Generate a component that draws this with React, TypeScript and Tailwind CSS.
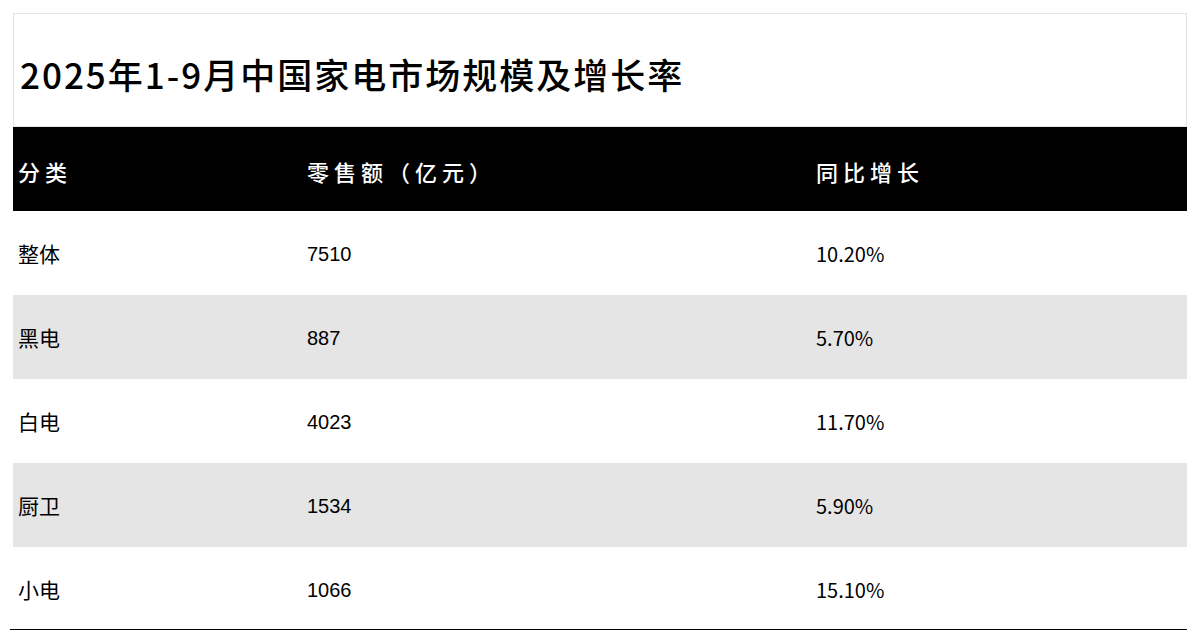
const rows = [
  { name: "整体", amount: "7510", growth: "10.20%" },
  { name: "黑电", amount: "887", growth: "5.70%" },
  { name: "白电", amount: "4023", growth: "11.70%" },
  { name: "厨卫", amount: "1534", growth: "5.90%" },
  { name: "小电", amount: "1066", growth: "15.10%" },
];

const cjk = "font-['Noto_Sans_CJK_SC',sans-serif]";

export default function App() {
  return (
    <main className={`min-h-screen bg-white pt-[13px] pl-[13px] ${cjk}`}>
      <div className="w-[1174px]">
        <div className="h-[114px] border border-[#e4e4e4] flex items-center pl-[6px] pt-[6px]">
          <h1 className="text-[35px] font-medium text-black tracking-[2px] leading-none">
            2025年1-9月中国家电市场规模及增长率
          </h1>
        </div>

        <div className="grid grid-cols-[289px_509px_376px] h-[84px] bg-black text-white items-center text-[22px] font-medium tracking-[5px] pt-[4px]">
          <div className="pl-[5px]">分类</div>
          <div className="pl-[5px]">零售额（亿元）</div>
          <div className="pl-[5px]">同比增长</div>
        </div>

        {rows.map((r, i) => (
          <div
            key={r.name}
            className={`grid grid-cols-[289px_509px_376px] h-[84px] items-center text-[21px] text-black pt-[2px] ${
              i % 2 === 1 ? "bg-[#e5e5e5]" : "bg-white"
            }`}
          >
            <div className="pl-[5px]">{r.name}</div>
            <div className="pl-[5px] font-['Liberation_Sans',sans-serif] text-[20px]">{r.amount}</div>
            <div className="pl-[5px] text-[20px]">{r.growth}</div>
          </div>
        ))}
      </div>
      <div className="w-[1177px] -ml-[3px] -mt-[2px] h-px bg-black" />
    </main>
  );
}
